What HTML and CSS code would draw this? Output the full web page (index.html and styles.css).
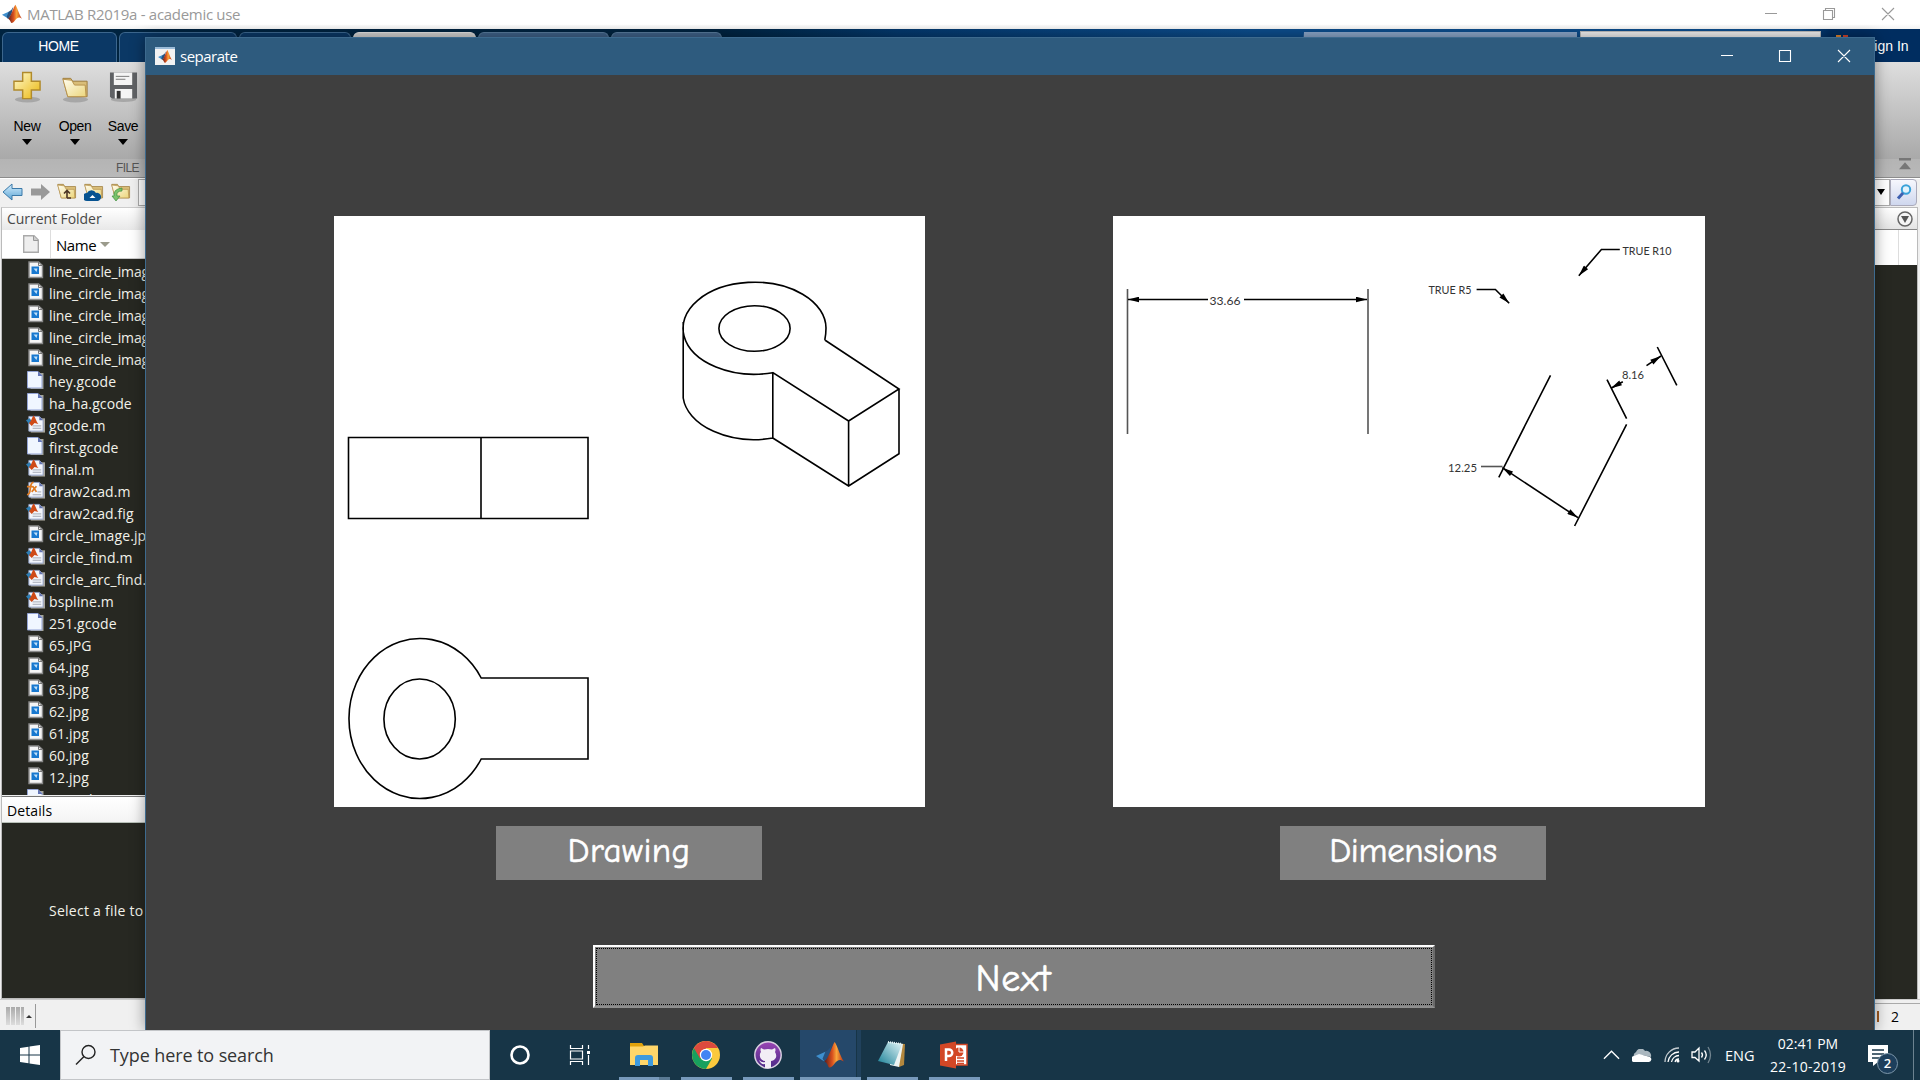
FILE: index.html
```html
<!DOCTYPE html>
<html lang="en">
<head>
<meta charset="utf-8">
<title>MATLAB R2019a - academic use</title>
<link rel="stylesheet" href="styles.css">
</head>
<body>
<svg class="defs" aria-hidden="true">
  <defs>
    <linearGradient id="gold" x1="0" y1="0" x2="1" y2="1"><stop offset="0" stop-color="#fffbd0"/><stop offset="1" stop-color="#eab60c"/></linearGradient>
    <linearGradient id="sand" x1="0" y1="0" x2="1" y2="1"><stop offset="0" stop-color="#fffdf0"/><stop offset="1" stop-color="#ecd67c"/></linearGradient>
    <linearGradient id="sky" x1="0" y1="0" x2="0" y2="1"><stop offset="0" stop-color="#d5efff"/><stop offset="1" stop-color="#5da5d4"/></linearGradient>
    <linearGradient id="flame" x1="0" y1="0" x2="1" y2="0"><stop offset="0" stop-color="#5b1d1b"/><stop offset=".4" stop-color="#d9501e"/><stop offset=".62" stop-color="#f8a43a"/><stop offset="1" stop-color="#b82b14"/></linearGradient>
    <linearGradient id="teal" x1="0" y1="1" x2="1" y2="0"><stop offset="0" stop-color="#187f96"/><stop offset="1" stop-color="#e4f6f8"/></linearGradient>
    <linearGradient id="violet" x1="0" y1="0" x2="0" y2="1"><stop offset="0" stop-color="#9a45b4"/><stop offset="1" stop-color="#4b2a86"/></linearGradient>
    <symbol id="matlab" viewBox="0 0 30 28">
      <path d="M0 15 10 10.500 14 13 9 21 6 19Z" fill="#3e8fce"/>
      <path d="M10 10.500 Q15 8 17 3 L14 15 9 21 7 18Z" fill="#27517e"/>
      <path d="M20 0C23 4 26 16 30 21 26 18 23 19 20 23 17 27 14 29 13 26 12 23 11 22 9 21 14 17 17 4 20 0Z" fill="url(#flame)"/>
    </symbol>
    <symbol id="folder" viewBox="0 0 28 22">
      <path d="M1 1H9L11 4H26V20H6Z" fill="#d9bd78" stroke="#9b7a3a"/>
      <path d="M1 2 10 3 13 8H24L25 20H6Z" fill="url(#sand)" stroke="#b7924c"/>
    </symbol>
    <symbol id="image-file" viewBox="0 0 18 18">
      <path d="M2.500 1H12L16 4.500V16.500H2.500Z" fill="#f5f5f5" stroke="#8b8b8b" stroke-width="1.400"/>
      <path d="M5 5.500H12.500V13H5Z" fill="#1878cf"/><path d="M7 7.500H11L10 11Z" fill="#bfe0fa"/><path d="M12 1V4.500H16" fill="none" stroke="#777"/>
    </symbol>
    <symbol id="blank-file" viewBox="0 0 18 18">
      <path d="M4 2H17V18H4Z" fill="#a6a69a"/><path d="M1 .5H11.500L15.500 4.500V17H1Z" fill="#f0f6ff" stroke="#93a3d4"/><path d="M11.500 .5V5H16Z" fill="#6375b5"/>
    </symbol>
    <symbol id="m-file" viewBox="0 0 20 18">
      <path d="M5 3H20V18H5Z" fill="#a9a69c"/><path d="M3 1H14L18 5V16.500H3Z" fill="#f2f5fc" stroke="#94a3c8"/><path d="M14 1V5H18Z" fill="#6271ad"/>
      <path d="M7 11H16M7 13.500H16" stroke="#a1a6b2"/><path d="M0 5 4 3 6 6 3 9Z" fill="#2e7db3"/><path d="M8 0C10 2 11 7 13 9L9 8 6 11 3 8C6 6 6 2 8 0Z" fill="#cf4a17"/>
    </symbol>
    <symbol id="fx-file" viewBox="0 0 20 18">
      <path d="M5 3H20V18H5Z" fill="#a9a69c"/><path d="M3 1H14L18 5V16.500H3Z" fill="#f2f5fc" stroke="#94a3c8"/><path d="M14 1V5H18Z" fill="#6271ad"/><path d="M12 11H16M7 14H16" stroke="#a1a6b2"/>
      <path d="M1 14Q4 14 4.500 8 5 1 8 1M1 5.500H7M7 5 11 11M11 5 6 11" fill="none" stroke="#df7a20" stroke-width="1.800"/>
    </symbol>
    <marker id="arrow" viewBox="0 0 12 6" refX="12" refY="3" markerWidth="12" markerHeight="6" markerUnits="userSpaceOnUse" orient="auto-start-reverse"><path d="M12 3 1 .2V5.800Z" fill="#000"/></marker>
  </defs>
</svg>

<div class="desktop">
  <header class="app-title">
    <svg class="app-logo"><use href="#matlab"/></svg>
    <span class="app-name">MATLAB R2019a - academic use</span>
    <svg class="app-controls" viewBox="0 0 130 14"><path d="M0 6.500H12M58.500 3.500H67.500V12.500H58.500ZM60.500 3.500V1.500H69.500V10.500H67.500M117 1 129 13M129 1 117 13"/></svg>
  </header>

  <nav class="tabs">
    <div class="tab home">HOME</div><div class="tab t2"></div><div class="tab t3"></div><div class="tab active"></div><div class="tab pale t5"></div><div class="tab pale t6"></div>
    <div class="tab-fill"></div><div class="quick"></div><div class="docsearch"></div><div class="sign-in"><i class="bell"></i>Sign In</div>
  </nav>

  <section class="toolstrip">
    <div class="tools">
      <div class="tool"><svg viewBox="0 0 30 32"><ellipse cx="15" cy="29" rx="13" ry="3" fill="#8888"/><path d="M10 1H19V10H28V19H19V28H10V19H1V10H10Z" fill="url(#gold)" stroke="#b08a2c" stroke-width="1.500"/></svg><span>New</span><i></i></div>
      <div class="tool"><svg viewBox="0 0 30 32"><ellipse cx="15" cy="29" rx="13" ry="3" fill="#8888"/><use href="#folder" x="1" y="6" width="28" height="22"/></svg><span>Open</span><i></i></div>
      <div class="tool"><svg viewBox="0 0 30 32"><ellipse cx="15" cy="29" rx="13" ry="2.500" fill="#8888"/><path d="M1 1H29V28H3L1 26Z" fill="#606265"/><path d="M5 1H24V14H5ZM6 18H24V28H6Z" fill="#f5f5f5"/><path d="M7 5H21M7 8H17" stroke="#777"/><path d="M8 20H12V28H8Z" fill="#333"/></svg><span>Save</span><i></i></div>
    </div>
    <div class="tool-caption">FILE</div>
    <svg class="collapse" viewBox="0 0 14 14"><path d="M0 0H14V3H0ZM7 5 14 13H0Z" fill="#777"/></svg>
  </section>

  <div class="address">
    <svg viewBox="0 0 20 18"><path d="M0 9 9 1V5.500H19V12.500H9V17Z" fill="url(#sky)" stroke="#3b79a8"/></svg>
    <svg viewBox="0 0 20 18"><path d="M20 9 11 1V5.500H1V12.500H11V17Z" fill="#999"/></svg>
    <svg viewBox="0 0 20 18"><use href="#folder" width="20" height="17"/><path d="M10 15V8M7 10.500 10 7.500 13 10.500M10 15H14" fill="none" stroke="#4b3524" stroke-width="1.600"/></svg>
    <svg viewBox="0 0 20 18"><use href="#folder" width="20" height="17"/><path d="M3 18A4 4 0 0 1 3 10 5 5 0 0 1 12 10 4 4 0 0 1 14 18Z" fill="#075391"/><path d="M5.500 15 8.500 12 11.500 15Z" fill="#fff"/></svg>
    <svg viewBox="0 0 20 18"><use href="#folder" width="20" height="17"/><path d="M11 8Q5 8 6 13H9L5 18 1 13H3Q2 6 11 5Z" fill="#7bc36c" stroke="#3d8c3c" stroke-width=".7"/></svg>
    <div class="path-box"><i class="down"></i></div>
    <div class="find"><svg viewBox="0 0 16 16"><circle cx="10" cy="5.500" r="4.200" fill="#e2f3fc" stroke="#39a2d9" stroke-width="2"/><path d="M7 9 2 14.500" stroke="#3d60b0" stroke-width="3"/></svg></div>
  </div>

  <main class="workspace">
    <aside class="left">
      <div class="panel-head">Current Folder</div>
      <div class="columns"><div class="col-icon"><svg viewBox="0 0 16 18"><path d="M.7.7H11L15.300 5V17.300H.7Z" fill="#eee" stroke="#aaa" stroke-width="1.400"/><path d="M10.500 1V5.500H15" fill="#ccc" stroke="#999"/></svg></div><div class="col-name">Name<i></i></div></div>
      <ul class="files">
        <li class="tight"><svg><use href="#image-file"/></svg>line_circle_image5.jpg</li>
        <li class="tight"><svg><use href="#image-file"/></svg>line_circle_image4.jpg</li>
        <li class="tight"><svg><use href="#image-file"/></svg>line_circle_image3.jpg</li>
        <li class="tight"><svg><use href="#image-file"/></svg>line_circle_image2.jpg</li>
        <li class="tight"><svg><use href="#image-file"/></svg>line_circle_image.jpg</li>
        <li><svg><use href="#blank-file"/></svg>hey.gcode</li>
        <li><svg><use href="#blank-file"/></svg>ha_ha.gcode</li>
        <li><svg><use href="#m-file"/></svg>gcode.m</li>
        <li><svg><use href="#blank-file"/></svg>first.gcode</li>
        <li><svg><use href="#m-file"/></svg>final.m</li>
        <li><svg><use href="#fx-file"/></svg>draw2cad.m</li>
        <li><svg><use href="#m-file"/></svg>draw2cad.fig</li>
        <li><svg><use href="#image-file"/></svg>circle_image.jpg</li>
        <li><svg><use href="#m-file"/></svg>circle_find.m</li>
        <li><svg><use href="#m-file"/></svg>circle_arc_find.m</li>
        <li><svg><use href="#m-file"/></svg>bspline.m</li>
        <li><svg><use href="#blank-file"/></svg>251.gcode</li>
        <li><svg><use href="#image-file"/></svg>65.JPG</li>
        <li><svg><use href="#image-file"/></svg>64.jpg</li>
        <li><svg><use href="#image-file"/></svg>63.jpg</li>
        <li><svg><use href="#image-file"/></svg>62.jpg</li>
        <li><svg><use href="#image-file"/></svg>61.jpg</li>
        <li><svg><use href="#image-file"/></svg>60.jpg</li>
        <li><svg><use href="#image-file"/></svg>12.jpg</li>
        <li><svg><use href="#blank-file"/></svg>5.gcode</li>
      </ul>
      <div class="details-head">Details</div>
      <div class="details">Select a file to</div>
    </aside>
    <aside class="right">
      <div class="right-head"><svg viewBox="0 0 16 16"><circle cx="8" cy="8" r="7" fill="#f5f5f5" stroke="#666" stroke-width="1.500"/><path d="M4 5H12L8 12Z" fill="#555"/></svg></div>
      <div class="right-cols"></div>
      <div class="right-body"></div>
    </aside>
  </main>

  <footer class="status"><i class="grip"></i><i class="up"></i><i class="rule"></i><span class="line-no"><b></b>2</span></footer>

  <div class="taskbar">
    <div class="start"><svg viewBox="0 0 20 20"><path d="M0 3 8.500 1.800V9.500H0ZM9.500 1.600 20 0V9.500H9.500ZM0 10.500H8.500V18.200L0 17ZM9.500 10.500H20V20L9.500 18.400Z" fill="#fff"/></svg></div>
    <div class="search"><svg viewBox="0 0 22 22"><circle cx="13.500" cy="8" r="6.500"/><path d="M9 12.500 1 20.500"/></svg><span>Type here to search</span></div>
    <div class="slot plain"><svg viewBox="0 0 28 28"><circle cx="14" cy="14" r="8.500" fill="none" stroke="#fff" stroke-width="2.600"/></svg></div>
    <div class="slot plain view"><svg viewBox="0 0 28 28"><path d="M4.500 4V7.500H16.500V4M4.500 24V20.500H16.500V24M4.500 10H16.500V18H4.500ZM22.500 4V8M22.500 14V24" fill="none" stroke="#fff" stroke-width="1.200"/><path d="M21 10H24V13H21Z" fill="#fff"/></svg></div>
    <div class="slot group"><svg viewBox="0 0 28 28"><path d="M0 2H12L14 5H28V24H0Z" fill="#e1a20b"/><path d="M0 5.500H13L15 4.500H28V24H0Z" fill="#ffd669"/><path d="M5 25V17Q5 14 8 14H20Q23 14 23 17V25H18V19H10V25Z" fill="#3e9ade"/></svg></div>
    <div class="slot"><svg viewBox="0 0 28 28"><circle cx="14" cy="14" r="14" fill="#fbc93d"/><path d="M14 14 1.900 7A14 14 0 0 0 14 28L20 17.500Z" fill="#18a05e"/><path d="M14 14 8 17.500 1.900 7A14 14 0 0 1 26.100 7H14Z" fill="#dc4a3e"/><circle cx="14" cy="14" r="6.200" fill="#fff"/><circle cx="14" cy="14" r="5" fill="#4284f3"/></svg></div>
    <div class="slot"><svg viewBox="0 0 28 28"><circle cx="14" cy="14" r="13.200" fill="url(#violet)" stroke="#d9d0e0" stroke-width="1.500"/><path d="M7 7 10 8.500Q14 7.500 18 8.500L21 7Q22 9 21 11 24 16 20 19 18 20 17 20V27H11V23Q7 24 5 19 8 22 11 21L11 20Q5 19 6 13 6 12 7 11 6 9 7 7Z" fill="#f2eef5"/></svg></div>
    <div class="slot current"><svg viewBox="0 0 30 28"><use href="#matlab"/></svg></div>
    <div class="slot"><svg viewBox="0 0 28 28"><path d="M10 2 27 3 26 24 21 26Z" fill="#b3873d"/><path d="M10 1 25 3 21 26 12 24Z" fill="#edf4f3"/><path d="M10 1 24 3 16 24 0 20Z" fill="url(#teal)"/><path d="M10 1 24 3" stroke="#e7f5f7" stroke-width="2" stroke-dasharray="1 1"/></svg></div>
    <div class="slot"><svg viewBox="0 0 28 28"><path d="M14 3.500H27V24H14Z" fill="#fff" stroke="#d34625" stroke-width="1.500"/><path d="M17 17H24M17 20H24M17 22.500H24" stroke="#d34625" stroke-width="1.500"/><circle cx="19" cy="11" r="4.500" fill="#d34625"/><path d="M19 11V6M19 11H24" stroke="#fff"/><path d="M0 3.500 16 .5V27.500L0 24.500Z" fill="#d24726"/><path d="M6 20V8.500H9A3.200 3.200 0 0 1 9 15H6" fill="none" stroke="#fff" stroke-width="2.500"/></svg></div>
    <div class="tray">
      <svg class="chev" viewBox="0 0 18 10"><path d="M1 9 9 1 17 9" fill="none" stroke="#fff" stroke-width="1.400"/></svg>
      <svg class="cloud" viewBox="0 0 20 13"><path d="M2 8A4 4 0 0 1 4 3 5 5 0 0 1 13 2 5 5 0 0 1 19 8L10 6Z" fill="#aab7bf"/><path d="M3 13A3 3 0 0 1 2 7L7 5 18 8A2.700 2.700 0 0 1 17 13Z" fill="#fff"/></svg>
      <svg class="wifi" viewBox="0 0 16 16"><g fill="none" stroke="#fff" stroke-width="1.300"><path d="M1 15A14 14 0 0 1 15 1" opacity=".75"/><path d="M4 15A11 11 0 0 1 15 5M7.500 15A8 8 0 0 1 15 8.500M11 15A4 4 0 0 1 15 12"/></g><circle cx="14" cy="14" r="1.500" fill="#fff"/></svg>
      <svg class="sound" viewBox="0 0 21 18"><g fill="none" stroke="#fff" stroke-width="1.300"><path d="M1 6H4L8 2V15L4 11.500H1ZM10.500 6.500Q12.500 9 10.500 11.500M13.500 4.500Q17 9 13.500 13.500"/><path d="M17 1Q22 9 17 17" opacity=".4"/></g></svg>
      <span class="lang">ENG</span>
      <div class="clock"><span>02:41 PM</span><span class="date">22-10-2019</span></div>
      <div class="notice"><svg viewBox="0 0 20 21"><path d="M0 0H20V17H10L5 21V17H0Z" fill="#fff"/><path d="M4 5H16M4 9H16M4 13H12" stroke="#173547" stroke-width="1.300"/></svg><span class="badge">2</span></div>
      <i class="peek"></i>
    </div>
  </div>

  <section class="dialog">
    <header class="dialog-title">
      <span class="dialog-icon"><svg><use href="#matlab"/></svg></span><span class="dialog-name">separate</span>
      <svg class="dialog-controls" viewBox="0 0 130 14"><path d="M0 6.500H12M58.500 1.500H69.500V12.500H58.500ZM117 1 129 13M129 1 117 13"/></svg>
    </header>
    <div class="plots">
      <figure>
        <svg class="plot" viewBox="334 216 591 591">
          <path d="M348.500 437.500H588V518.500H348.500ZM481 437.500V518.500"/>
          <path d="M824.800 340Q826 334 826 328A71.500 46 0 1 0 772.800 372.700L848.600 421 899 389 824.800 340M683.200 322V398A71.500 46 0 0 0 772.800 438V373M772.800 438 848.600 486 899 453.700V389M848.600 421V486"/>
          <ellipse cx="754.500" cy="328.500" rx="35.600" ry="22.800"/>
          <path d="M481.200 678A71 80 0 1 0 481.200 759H588V678Z"/>
          <ellipse cx="419.600" cy="719" rx="35.700" ry="40"/>
        </svg>
        <figcaption>Drawing</figcaption>
      </figure>
      <figure>
        <svg class="plot" viewBox="1113.500 216 591 591">
          <path class="ext" d="M1127.500 289V434M1368 289V434"/>
          <path marker-start="url(#arrow)" d="M1128 299.500H1208"/><path marker-end="url(#arrow)" d="M1244 299.500H1367"/>
          <path marker-end="url(#arrow)" d="M1619.800 249.500H1601.400L1578.800 275.700"/>
          <path marker-end="url(#arrow)" d="M1476.600 289.500H1495.400L1509.200 303.300"/>
          <path marker-end="url(#arrow)" d="M1646.500 365.700 1661 356"/><path marker-end="url(#arrow)" d="M1622.800 381.700 1611 388.300"/>
          <path d="M1657.300 347 1676.800 385.300M1607 379.700 1626.600 418.700M1626.600 424.300 1574.600 526M1550.500 375.300 1498.800 477.300"/>
          <path marker-start="url(#arrow)" marker-end="url(#arrow)" d="M1502.300 467.700 1578 517.700"/>
          <path class="ext" d="M1481 466.500H1502.500"/>
          <g class="dims"><text x="1209.500" y="304.500" textLength="31" lengthAdjust="spacingAndGlyphs">33.66</text><text x="1622.500" y="254.500" textLength="49" lengthAdjust="spacingAndGlyphs">TRUE R10</text><text x="1428.500" y="294" textLength="43" lengthAdjust="spacingAndGlyphs">TRUE R5</text><text x="1622" y="379" textLength="22" lengthAdjust="spacingAndGlyphs">8.16</text><text x="1448" y="471.500" textLength="29" lengthAdjust="spacingAndGlyphs">12.25</text></g>
        </svg>
        <figcaption class="wide">Dimensions</figcaption>
      </figure>
    </div>
    <button class="next"><span>Next</span></button>
  </section>
</div>
</body>
</html>
```
FILE: styles.css
```css
* { box-sizing: border-box; }
body { margin: 0; font-family: "Open Sans", "Noto Sans", sans-serif; }
svg { display: block; flex: none; }
i, b { flex: none; }
.defs { position: absolute; width: 0; height: 0; }
.desktop { position: relative; display: flex; flex-direction: column; width: 1920px; height: 1080px; overflow: hidden; background: #f0f0f0; }

.app-title { display: flex; align-items: center; height: 29px; padding: 0 25px 2px 2px; background: linear-gradient(#fff 24px, #f2f2f2); }
.app-logo { width: 20px; height: 20px; }
.app-name { margin-left: 5px; flex: 1; font-size: 15px; letter-spacing: -.3px; color: #999; }
.app-controls { width: 130px; height: 14px; fill: none; stroke: #999; stroke-width: 1.1; }

.tabs { display: flex; height: 33px; padding: 3px 0 0 2px; background: linear-gradient(90deg, #00233f 720px, #04386c 900px, #0c4c8b 1250px, #0c4c8b 1800px, #002d60 1830px); }
.tab { flex: none; margin-right: 2px; background: #0b3865; border: 1px solid #3c668d; border-bottom: 0; border-radius: 6px 6px 0 0; }
.home { width: 115px; padding-right: 2px; color: #fff; text-align: center; font: 14px/27px "Liberation Sans", sans-serif; letter-spacing: -.4px; }
.t2 { width: 118px; }
.t3 { width: 112px; }
.active { width: 123px; background: #d0d0d0; border-color: #e0e0e0; }
.pale { background: #3e6187; border-color: #57799a; }
.t5 { width: 131px; }
.t6 { width: 111px; }
.tab-fill { width: 578px; }
.quick { width: 275px; background: #8aa6c9; clip-path: polygon(2px 0, 100% 0, 100% 100%, 0 100%); }
.docsearch { width: 241px; margin: -1px 0 0 3px; background: #f0f0f0; border: 1px solid #bbb; }
.sign-in { display: flex; margin-left: 12px; color: #fff; font: 14px/28px "Liberation Sans", sans-serif; white-space: nowrap; }
.bell { width: 12px; height: 6px; margin: 3px 17px 0 3px; background: linear-gradient(90deg, #e0852e 5px, transparent 5px 7px, #d0432c 7px); }

.toolstrip { display: grid; grid-template: 97px 19px / 145px 1fr 22px; height: 116px; background: linear-gradient(#dedede, #a9a9a9 97px, #b4b4b4 97px, #b9b9b9); border-bottom: 1px solid #8c8c8c; }
.tools { display: flex; padding-left: 3px; }
.tool { display: flex; flex-direction: column; flex: none; align-items: center; width: 48px; padding-top: 9px; font: 14px/16px "Liberation Sans", sans-serif; }
.tool svg { width: 29px; height: 32px; margin-bottom: 15px; }
.tool span { letter-spacing: -.4px; }
.tool i, .down { border: 5px solid transparent; border-top: 6px solid #000; border-bottom: 0; margin-top: 5px; }
.tool-caption { grid-row: 2; padding-right: 6px; text-align: right; font: 12px/18px "Liberation Sans", sans-serif; letter-spacing: -.6px; color: #555; }
.collapse { grid-area: 1 / 3 / 3 / 4; width: 12px; height: 14px; margin: 95px 0 0 1px; }

.address { display: flex; align-items: center; height: 29px; padding: 0 3px 2px; background: #f0f0f0; border-top: 1px solid #fff; }
.address > svg { width: 20px; height: 18px; margin-right: 7px; }
.path-box { display: flex; align-items: center; justify-content: flex-end; flex: 1; height: 27px; padding-right: 4px; background: #fff; border: 1px solid #aaa; }
.path-box .down { margin: 0; border-width: 6px 4px 0; }
.find { display: grid; place-items: center; width: 27px; height: 27px; background: linear-gradient(#f6f7fd, #cfd7ee); border: 1px solid #aab; border-radius: 0 4px 4px 0; }
.find svg { width: 16px; height: 16px; }

.workspace { display: flex; justify-content: space-between; height: 792px; padding: 0 2px 0 1px; }
.left { display: flex; flex-direction: column; width: 400px; border: 1px solid #bbb; border-top-color: #ccc; }
.left > * { flex: none; }
.panel-head { height: 22px; padding-left: 5px; background: linear-gradient(#fff, #e8e8e8); color: #484848; font-size: 14px; line-height: 22px; letter-spacing: -.05px; }
.columns { display: flex; height: 29px; background: #fff; border-bottom: 1px solid #ccc; }
.col-icon { width: 49px; padding: 5px 0 0 21px; border-right: 1px solid #ddd; }
.col-icon svg { width: 16px; height: 18px; }
.col-name { display: flex; align-items: center; padding: 1px 0 0 5px; font-size: 15px; letter-spacing: -.45px; }
.col-name i { margin-left: 4px; border: 5px solid transparent; border-top: 5px solid #9b9b8c; border-bottom: 0; }
.files { height: 536px; margin: 0; padding: 1px 0 0 24px; overflow: hidden; list-style: none; background: #272822; color: #f2f2ea; }
.files li { display: flex; height: 22px; font-size: 14px; line-height: 24px; letter-spacing: .1px; white-space: nowrap; }
.files .tight { letter-spacing: -.1px; }
.files svg { width: 19px; height: 18px; margin: 1px 4px 0 0; }
.details-head { height: 27px; margin-top: 1px; padding-left: 5px; background: linear-gradient(#fff, #f4f4f4); border-top: 1px solid #777; border-bottom: 1px solid #b8c0b8; font-size: 14px; line-height: 27px; letter-spacing: .1px; }
.left > .details { flex: 1 1 0; min-height: 0; padding-left: 47px; background: #272822; color: #f2f2ea; font-size: 14px; line-height: 175px; letter-spacing: .25px; }
.right { display: flex; flex-direction: column; width: 300px; border: solid #bbb; border-width: 1px 1px 0; }
.right-head { display: flex; justify-content: flex-end; height: 22px; padding: 3px 4px 0; background: linear-gradient(#fff, #e4e4e4); border-bottom: 1px solid #888; }
.right-head svg { width: 16px; height: 16px; }
.right-cols { height: 35px; background: linear-gradient(90deg, #fff 279px, #ddd 279px 280px, #fff 280px); }
.right-body { flex: 1; background: #272822; }

.status { display: flex; align-items: center; height: 31px; padding: 2px 0 0 6px; background: #f0f0f0; border-top: 1px solid #ccc; }
.grip { width: 18px; height: 18px; background: repeating-linear-gradient(90deg, transparent 0 4px, #f0f0f0 4px 5px), linear-gradient(#aaa, #ddd); }
.up { margin-left: 2px; border: 3px solid transparent; border-bottom: 3px solid #333; border-top: 0; }
.rule { width: 1px; height: 24px; margin-left: 3px; background: #999; }
.line-no { display: flex; align-items: center; gap: 12px; margin-left: auto; width: 45px; height: 26px; border-top: 1px solid #aaa; font-size: 14px; }
.line-no b { width: 2px; height: 11px; margin-left: 2px; background: #a05a20; }

.taskbar { display: flex; height: 50px; background: #173547; color: #fff; }
.start { display: grid; place-items: center; width: 60px; }
.start svg { width: 20px; height: 20px; }
.search { display: flex; align-items: center; width: 430px; padding-left: 14px; background: #f2f3f5; border: 1px solid #c3c5c8; color: #333; font-size: 18px; }
.search svg { width: 22px; height: 22px; margin-right: 13px; fill: none; stroke: #222; stroke-width: 1.4; }
.search span { letter-spacing: -.1px; }
.slot { position: relative; display: grid; place-items: center; width: 62px; height: 50px; }
.slot.plain { width: 60px; }
.slot.view { width: 63px; padding-right: 3px; }
.slot svg { width: 28px; height: 28px; }
.slot:not(.plain)::after { content: ""; position: absolute; left: 6px; right: 5px; bottom: 0; height: 3px; background: #7799bb; }
.slot.group::after { background: linear-gradient(90deg, #7799bb 40px, #5a7a94 40px); }
.current { background: linear-gradient(90deg, transparent 1px, #25486a 1px 57px, #173547 57px 58px, #20415c 58px); }
.slot.current::after { left: 1px; right: 0; }
.tray { display: flex; align-items: center; flex: 1; padding-left: 618px; }
.chev { width: 17px; height: 10px; }
.cloud { width: 20px; height: 13px; margin-left: 12px; }
.wifi { width: 16px; height: 16px; margin-left: 12px; }
.sound { width: 21px; height: 18px; margin-left: 11px; }
.lang { width: 30px; margin-left: 13px; font-size: 14.500px; letter-spacing: 0; }
.clock { display: flex; flex-direction: column; width: 84px; margin-left: 11px; text-align: center; font-size: 14px; line-height: 23px; letter-spacing: 0; }
.clock .date { letter-spacing: .3px; }
.notice { position: relative; margin-left: 18px; }
.notice svg { width: 20px; height: 21px; }
.badge { position: absolute; left: 9px; top: 8px; width: 21px; height: 21px; border: 1px solid #7d97aa; border-radius: 50%; background: #1d3f5c; text-align: center; font-size: 13px; font-weight: 600; line-height: 19px; }
.peek { width: 1px; height: 50px; margin-left: 25px; background: #6c8290; }

.dialog { position: absolute; left: 145px; top: 37px; width: 1730px; height: 993px; display: flex; flex-direction: column; align-items: center; background: #3f3f3f; border: 1px solid #3d6a8e; border-bottom: 0; box-shadow: 0 0 14px rgba(0, 0, 0, .4); clip-path: inset(-12px -20px 0 -20px); }
.dialog-title { display: flex; align-items: center; align-self: stretch; height: 37px; padding: 0 23px 2px 9px; background: #2e5b7e; color: #fff; }
.dialog-icon { display: grid; place-items: center; width: 20px; height: 18px; background: #f2f2f2; border-top: 2px solid #9bbcd8; }
.dialog-icon svg { width: 14px; height: 13px; }
.dialog-name { flex: 1; margin-left: 5px; font-size: 15px; letter-spacing: -.5px; }
.dialog-controls { width: 130px; height: 14px; fill: none; stroke: #fff; stroke-width: 1.1; }
.plots { display: flex; align-self: stretch; gap: 188px; padding: 141px 0 0 188px; }
figure { display: flex; flex-direction: column; width: 591px; margin: 0; }
figure + figure .plot { width: 592px; }
.plot { width: 591px; height: 591px; background: #fff; fill: none; stroke: #000; stroke-width: 1.600; }
.plot .ext { stroke: #555; }
.dims { fill: #333; stroke: none; font: 11px Lato, sans-serif; }
figcaption, .next { font-family: "Comic Sans MS", "Comic Neue", "Open Sans", sans-serif; color: #fff; -webkit-text-stroke: .6px #fff; }
figcaption { width: 266px; height: 54px; margin: 19px 0 0 162px; background: #808080; text-align: center; font-size: 35px; line-height: 49px; letter-spacing: .4px; white-space: nowrap; }
figcaption.wide { margin-left: 167px; letter-spacing: -.3px; }
.next { width: 842px; height: 63px; margin: 65px 0 0 7px; padding: 1px; background: #808080; border: 2px solid; border-color: #fff #6a6a6a #8f8f8f #fff; font-size: 38px; letter-spacing: .8px; }
.next span { display: block; height: 57px; border: 1px dotted #000; line-height: 60px; }
```
